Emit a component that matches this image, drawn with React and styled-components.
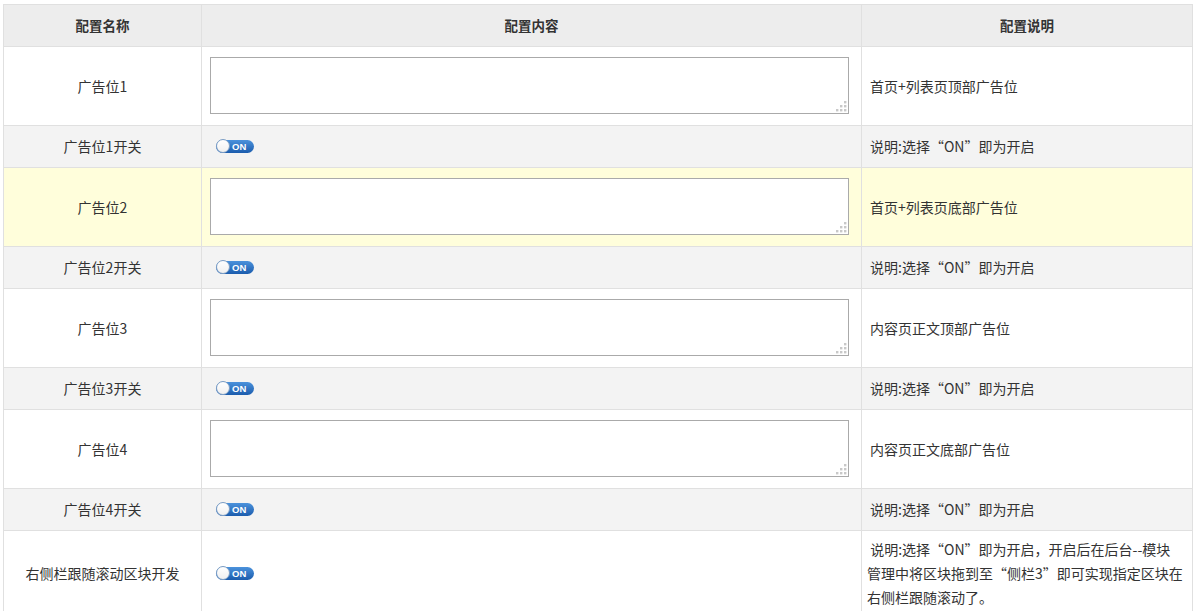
import styled, { createGlobalStyle } from "styled-components";

const GlobalStyle = createGlobalStyle`
  html, body {
    margin: 0;
    padding: 0;
    background: #fff;
  }
  body {
    font-family: "Noto Sans CJK SC", "Liberation Sans", sans-serif;
    font-size: 14px;
    color: #333;
  }
`;

const Page = styled.div`
  padding: 4px 0 0 3px;
`;

const Table = styled.table`
  width: 1189px;
  border-collapse: collapse;
  table-layout: fixed;
`;

const HeadCell = styled.th`
  background: #ededed;
  border: 1px solid #e0e0e0;
  font-weight: bold;
  font-size: 13.5px;
  line-height: 21px;
  padding: 10px 8px;
  text-align: center;
  color: #333;
`;

const Row = styled.tr`
  background: ${(p) => (p.$hover ? "#fffedb" : p.$alt ? "#f3f3f3" : "#fff")};
`;

const Cell = styled.td`
  border: 1px solid #e0e0e0;
  padding: ${(p) => p.$pad || "10px 8px"};
  line-height: ${(p) => p.$lh || "21px"};
  text-align: ${(p) => (p.$center ? "center" : "left")};
  vertical-align: middle;
`;

const AreaWrap = styled.div`
  position: relative;
  width: 639px;
  height: 57px;
`;

const Area = styled.textarea`
  display: block;
  box-sizing: border-box;
  width: 100%;
  height: 100%;
  border: 1px solid #aaa;
  background: #fff;
  resize: none;
  outline: none;
  font: inherit;
`;

const Grip = styled.svg`
  position: absolute;
  right: 2px;
  bottom: 2px;
  width: 11px;
  height: 11px;
`;

const Switch = styled.span`
  display: flex;
  align-items: center;
  position: relative;
  width: 38px;
  height: 13px;
  margin-left: 6px;
  border-radius: 7px;
  background: linear-gradient(#4b92dc, #1b5cad);
`;

const Knob = styled.span`
  position: absolute;
  left: 0;
  top: -1px;
  box-sizing: border-box;
  width: 14px;
  height: 14px;
  border-radius: 50%;
  background: linear-gradient(#fff, #f0f0f0);
  border: 1px solid #7a9cc4;
`;

const SwitchLabel = styled.span`
  margin-left: 16px;
  font-family: "Liberation Sans", Arial, sans-serif;
  font-weight: bold;
  font-size: 9.5px;
  line-height: 13px;
  color: #fff;
`;

const GripIcon = () => (
  <Grip viewBox="0 0 11 11">
    {[
      [8, 0],
      [4, 4],
      [8, 4],
      [0, 8],
      [4, 8],
      [8, 8],
    ].map(([x, y]) => (
      <rect key={`${x}-${y}`} x={x} y={y} width="2.4" height="2.4" fill="#c8c8c8" />
    ))}
  </Grip>
);

const Toggle = () => (
  <Switch>
    <Knob />
    <SwitchLabel>ON</SwitchLabel>
  </Switch>
);

const note = "说明:选择“ON”即为开启";

const rows = [
  { name: "广告位1", desc: "首页+列表页顶部广告位" },
  { name: "广告位2", desc: "首页+列表页底部广告位", hover: true },
  { name: "广告位3", desc: "内容页正文顶部广告位" },
  { name: "广告位4", desc: "内容页正文底部广告位" },
];

const App = () => {
  return (
    <Page>
      <GlobalStyle />
      <Table>
        <colgroup>
          <col style={{ width: 198 }} />
          <col style={{ width: 660 }} />
          <col style={{ width: 331 }} />
        </colgroup>
        <thead>
          <tr>
            <HeadCell>配置名称</HeadCell>
            <HeadCell>配置内容</HeadCell>
            <HeadCell>配置说明</HeadCell>
          </tr>
        </thead>
        <tbody>
          {rows.map((r) => [
            <Row key={r.name} $hover={r.hover}>
              <Cell $center>{r.name}</Cell>
              <Cell $pad="10px 8px 11px">
                <AreaWrap>
                  <Area />
                  <GripIcon />
                </AreaWrap>
              </Cell>
              <Cell>{r.desc}</Cell>
            </Row>,
            <Row key={r.name + "开关"} $alt>
              <Cell $center>{r.name}开关</Cell>
              <Cell $pad="14px 8px">
                <Toggle />
              </Cell>
              <Cell>{note}</Cell>
            </Row>,
          ])}
          <Row>
            <Cell $center $pad="6px 8px" $lh="24px">
              右侧栏跟随滚动区块开发
            </Cell>
            <Cell $pad="6px 8px">
              <Toggle />
            </Cell>
            <Cell $pad="6px 4px 6px 5px" $lh="24px">
              &nbsp;说明:选择“ON”即为开启，开启后在后台--模块
              <br />
              管理中将区块拖到至“侧栏3”即可实现指定区块在
              <br />
              右侧栏跟随滚动了。
            </Cell>
          </Row>
        </tbody>
      </Table>
    </Page>
  );
};

export default App;
